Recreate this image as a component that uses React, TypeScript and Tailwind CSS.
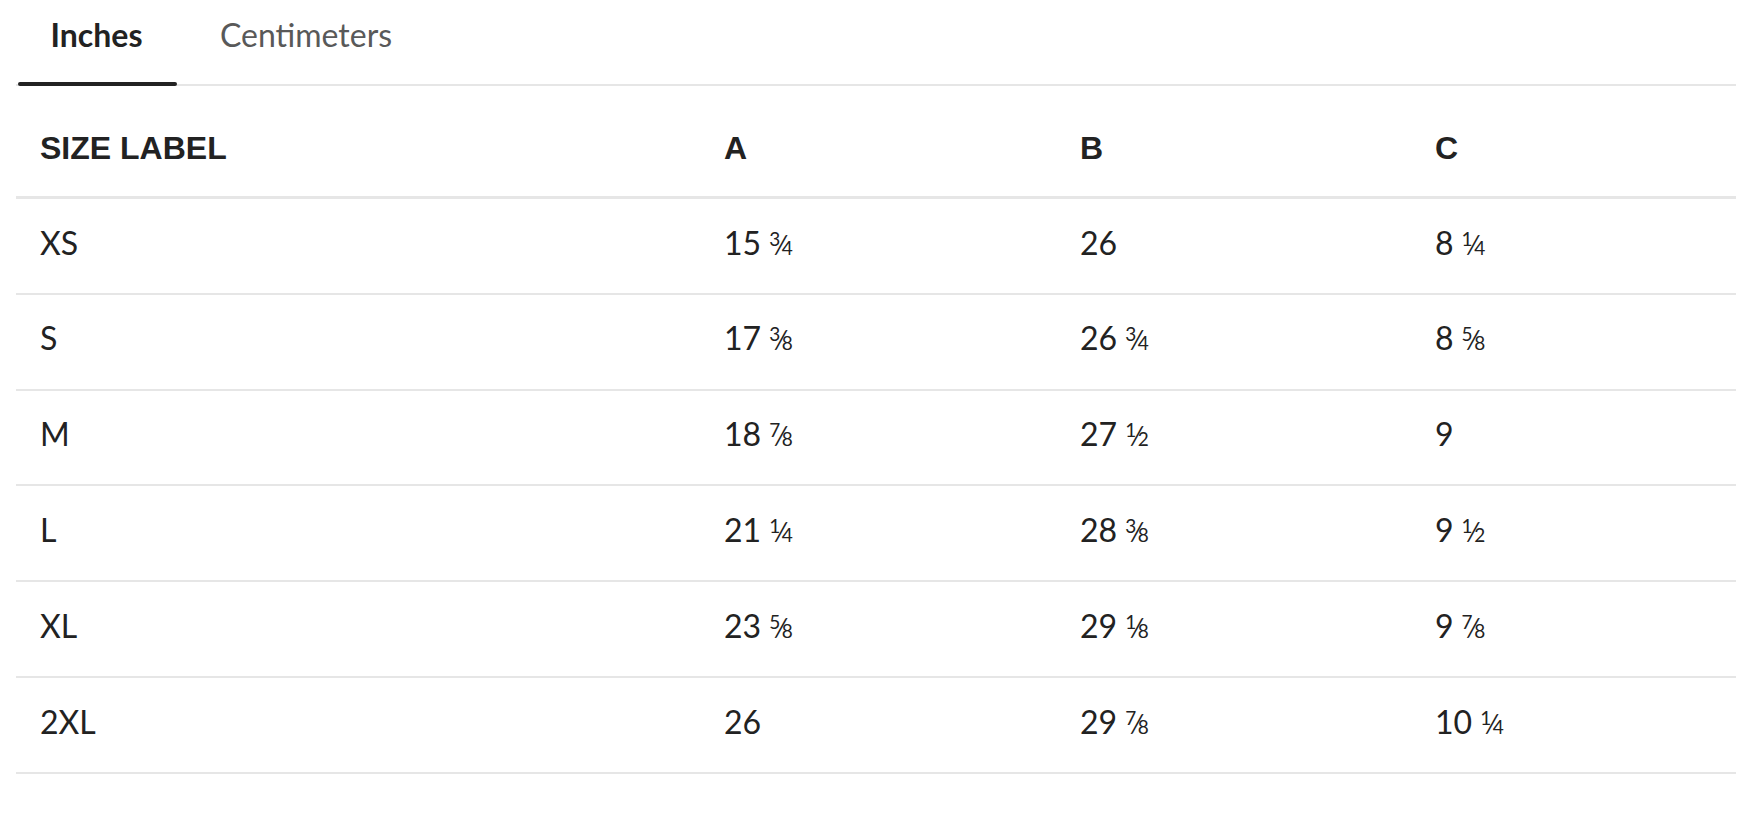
import React from "react";

type Cell = [string, string?, string?];

const rows: Cell[][] = [
  [["XS"], ["15", "3", "4"], ["26"], ["8", "1", "4"]],
  [["S"], ["17", "3", "8"], ["26", "3", "4"], ["8", "5", "8"]],
  [["M"], ["18", "7", "8"], ["27", "1", "2"], ["9"]],
  [["L"], ["21", "1", "4"], ["28", "3", "8"], ["9", "1", "2"]],
  [["XL"], ["23", "5", "8"], ["29", "1", "8"], ["9", "7", "8"]],
  [["2XL"], ["26"], ["29", "7", "8"], ["10", "1", "4"]],
];

function Value({ c }: { c: Cell }) {
  const [whole, num, den] = c;
  return (
    <span className="whitespace-nowrap">
      {whole}
      {num && den ? (
        <span className="ml-[8px] inline-flex items-baseline">
          <span className="relative top-[-9px] text-[19px] leading-none">{num}</span>
          <span className="mx-[-1px] text-[26px] leading-none">⁄</span>
          <span className="text-[19px] leading-none">{den}</span>
        </span>
      ) : null}
    </span>
  );
}

export default function App() {
  return (
    <div className="min-h-[830px] w-[1760px] bg-white text-[#222222] [font-family:Lato,'Noto_Sans',sans-serif]">
      <div className="ml-[16px] w-[1720px]">
        <div className="flex border-b-2 border-[#e6e6e6]">
          <button className="relative h-[84px] w-[161px] pb-[15px] text-center text-[32px] leading-[40px] font-bold text-[#222222] self-start">
            Inches
            <span className="absolute left-[2px] right-0 bottom-[-2px] h-[4px] rounded-full bg-[#222222]" />
          </button>
          <button className="relative ml-[11px] h-[84px] w-[236px] pb-[15px] text-center text-[32px] leading-[40px] text-[#595959] self-start">
            Centimeters
          </button>
        </div>
        <div className="grid h-[113px] grid-cols-[684px_356px_355px_325px] border-b-[3px] border-[#e6e6e6] pt-[42px] text-[32px] leading-[40px] font-bold [font-family:'Liberation_Sans',Arial,sans-serif]">
          <div className="pl-[24px]">SIZE LABEL</div>
          <div className="pl-[24px]">A</div>
          <div className="pl-[24px]">B</div>
          <div className="pl-[24px]">C</div>
        </div>
        {rows.map((r) => (
          <div
            key={r[0][0]}
            className="grid h-[95.8px] grid-cols-[684px_356px_355px_325px] border-b-2 border-[#e6e6e6] pt-[23.6px] text-[32px] leading-[40px]"
          >
            {r.map((c, i) => (
              <div key={i} className="pl-[24px]">
                <Value c={c} />
              </div>
            ))}
          </div>
        ))}
      </div>
    </div>
  );
}
